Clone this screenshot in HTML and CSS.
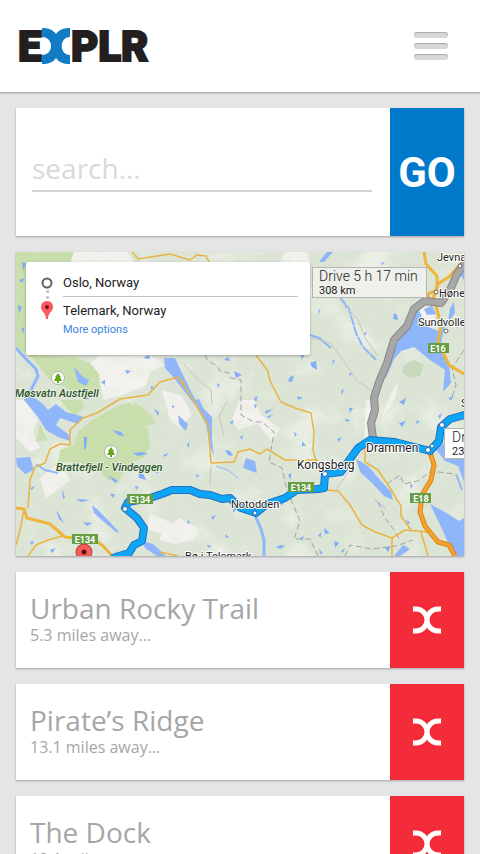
FILE: index.html
```
<!DOCTYPE html>
<html lang="en">

<head>
    <meta charset="UTF-8">
    <meta name="viewport" content="width=device-width, initial-scale=1.0">
    <title>EXPLR</title>
    <link rel="stylesheet" href="styles.css">
</head>

<body>
    <!-- shared X mark -->
    <svg class="defs" width="0" height="0" aria-hidden="true">
        <symbol id="mark" viewBox="0 0 28 28">
            <path d="M0 3H3A11 11 0 0 1 3 25H0M28 3H25A11 11 0 0 0 25 25H28" fill="none" stroke="currentColor" stroke-width="5" />
        </symbol>
    </svg>

    <header class="header">
        <a class="logo" href="#" aria-label="EXPLR">
            <svg width="130" height="36" viewBox="0 0 130 36" aria-hidden="true">
                <text class="logo-text" x="-2" y="33">E</text>
                <path d="M22 0C29 0 33 2 36 6C39 2 43 0 50 0V9C39 9 39 27 50 27V36C43 36 39 34 36 30C33 34 29 36 22 36V27C34 27 34 9 22 9Z" fill="#117bc4" />
                <text class="logo-text" x="51" y="33">PLR</text>
            </svg>
        </a>
        <button class="menu" type="button" aria-label="Menu">
            <span></span>
            <span></span>
            <span></span>
        </button>
    </header>

    <main class="content">
        <form class="card search">
            <div class="field">
                <input type="text" placeholder="search..." aria-label="Search">
            </div>
            <button class="go" type="button">GO</button>
        </form>

        <section class="map">
            <svg class="map-canvas" viewBox="16 252 448 304" preserveAspectRatio="xMidYMid slice" role="img" aria-label="Route from Oslo to Telemark">
                <defs>
                    <filter id="terrain" x="0" y="0" width="1" height="1">
                        <feTurbulence type="fractalNoise" baseFrequency=".025" numOctaves="5" seed="8" />
                        <feColorMatrix values="0 0 0 0 .955  0 0 0 0 .953  0 0 0 0 .94  4 0 0 0 -2.15" />
                    </filter>
                    <filter id="relief" x="0" y="0" width="1" height="1">
                        <feTurbulence type="fractalNoise" baseFrequency=".09" numOctaves="3" seed="3" />
                        <feColorMatrix values="0 0 0 0 .7  0 0 0 0 .77  0 0 0 0 .65  2 0 0 0 -.9" />
                    </filter>
                </defs>
                <rect x="16" y="252" width="448" height="304" fill="#dce5d5" />

                <!-- open ground -->
                <g fill="#f2f1ed">
                    <path d="M70 252H128L134 262H70ZM100 355H150L165 365L150 372L146 385L120 396L104 400L99 378L88 365ZM285 252H307L310 264H280Z" />
                    <path d="M16 400L28 400L38 420L33 432L40 448L30 452L16 438ZM40 478L60 462L70 480L55 492L46 498ZM162 390L182 396L192 415L180 428L170 420ZM162 530L180 518L198 528L194 540L175 544L160 540Z" />
                    <path d="M239 400H254L262 416L280 428L272 442L258 424L238 430L232 420ZM150 514L170 522L168 534L146 530ZM418 305L432 308L436 325L424 332L417 322ZM366 400L372 400L374 435L364 440ZM398 382L396 396L382 418L390 396Z" />
                </g>
                <rect x="16" y="252" width="448" height="304" filter="url(#terrain)" opacity=".5" />

                <!-- parks -->
                <g fill="#c8deab">
                    <path d="M16 252H74L70 264H27L26 350L32 355L75 357L91 364L99 374L100 389L88 394L70 390L48 378L33 358L16 348Z" />
                    <path d="M92 420L114 408L130 402L140 410L148 430L150 447L143 458L128 464L118 482L108 480L98 468L80 463L58 462L60 450L74 445L78 432Z" />
                    <path d="M60 400L82 400L84 408L74 416ZM40 424L48 440L36 442ZM132 400L152 415L155 424L145 426Z" />
                </g>
                <path d="M404 365l10-5 10 4-4 12-11 2-7-6z" fill="#c7d9bd" />
                <rect x="16" y="252" width="448" height="304" filter="url(#relief)" opacity=".3" />

                <!-- lakes and rivers -->
                <g fill="#8fb6fb">
                    <path d="M164 358L175 358L181 371L200 409L194 404L174 378L165 368Z" />
                    <path d="M193 400L199 399L203 408L212 417L212 440L214 456L210 446L206 424L198 410Z" />
                    <path d="M24 400L32 396L43 404L48 410L56 404L66 412L84 417L78 424L60 418L56 425L68 434L71 441L58 437L46 430L38 417Z" />
                    <path d="M16 458L30 457L34 470L25 474L17 466ZM246 458L255 461L257 473L243 468ZM178 415L188 424L186 431L179 424ZM74 367L82 376L89 380L86 386L78 382Z" />
                    <path d="M418 308L426 326L438 331L445 324L441 344L449 365L451 383L443 392L445 370L430 360L414 347L401 351L394 359L386 378L385 374L396 346L406 328Z" />
                    <path d="M450 308L454 302L455 313L448 322ZM424 309L432 306L436 314L427 315Z" />
                    <path d="M434 447L448 442L454 451L464 453V482L458 466L445 461ZM430 504L445 512L459 521L464 518V556H457L449 545L442 529Z" />
                    <path d="M356 459L368 466L380 480L391 492L393 500L384 496L372 483L360 472Z" />
                    <path d="M92 505L97 509L108 520L119 532L116 532L104 522L94 513ZM142 541L153 544L166 556H157L145 548Z" />
                    <path d="M333 252L324 262H319L327 252ZM459 274L464 268V280ZM394 556L403 545L410 549L400 556Z" />
                </g>
                <g fill="none" stroke="#8fb6fb" stroke-width="3">
                    <path d="M16 348L25 358L36 369L38 376L30 392L25 400" />
                    <path d="M254 513L261 529L264 540V556" />
                    <path d="M340 297L349 309L356 333L363 347L376 360" stroke-width="2" stroke-dasharray="10 1" />
                    <path d="M310 335L319 338L331 348M36 464L45 470L58 473M456 443V460M456 474L462 490" stroke-width="2" />
                    <path d="M375 500L385 508M216 466L228 470L238 478" stroke-width="1" />
                </g>
                <!-- tarns -->
                <path fill="#82adfa" d="M22 262l4 1-3 8zM19 280l6-2-3 5zM18 305l4 2-3 7zM21 329l3-2v6zM101 382l4-2v5zM125 370l6 1-4 3zM143 358l6-3 1 4zM85 395l4 4-4 1zM113 430l8 2 3 4-6-1zM133 453l10-1 5 2-10 2zM84 437l3 0-1 11-2 2zM154 409l5 3-1 4zM138 470l6 5 2 5-7-2zM62 489l3 8-2 2zM76 499l14 1-9 2zM108 475l10 6-3 2zM56 510l4 6 4 7-5-4zM83 522l9 1-5 3zM30 488l5-2-3 4zM135 486l4 1-3 3zM110 494l5 0-2 4zM224 360l4-3 2 4zM234 371l8 4-6 3zM217 383l3 2-2 3zM254 398l4-2-2 6zM290 377l4-2-2 7-4-1zM297 396l6 2-5 2zM310 363l6-2 1 9-5-3zM301 355l4-2-3 7zM254 404l3 1-2 4zM265 411l8-2-7 5zM225 450l5 1 3 5-5-1zM230 422l4-2-2 5zM267 416l7-1-6 3zM294 432l3 2-2 3zM302 441l4 5-4 0zM288 475l3-2v7zM303 484l5-1-3 5zM211 517l5-2-3 5zM225 534l4 3-3 1zM233 507l3 3-3 3zM276 547l5-2 4 1-5 3zM300 538l4-2-2 5zM282 501l3 1-4 4zM318 536l3-4v5zM319 549l4 4-3 1zM394 313l3 2 1 5-5-1zM345 304l2 2-2 3zM364 333l3-1-2 4zM391 272l3-2-1 5zM381 263l4-1-3 3zM341 391l3-2-2 6zM399 402l7-4-2 7zM349 408l4 0-3 5zM399 423l7-2-4 6zM345 419l6 1-5 2zM337 439l5-2-3 5zM324 528l6 5-5 1zM334 541l5 2-4 5zM341 551l4-3-2 5zM417 420l3 2-4 2zM438 416l4-3-2 6zM448 398l6-2-3 4zM349 374l3-2-2 5zM333 359l2 2-3 4zM318 311l2-2-1 6zM406 520l4 2-2 3zM385 548l6-2-3 6zM410 484l3 1-2 4zM419 280l2-3v5zM172 405l3 2-3 1zM163 455l6-2-4 4zM240 437l3-2-1 5zM187 445l2-3v6zM196 474l4 2-4 1zM155 470l5 2-4 1zM50 550l6-2-4 5zM30 542l4-1-2 4zM188 520l2 3-3 1zM207 545l5 1-4 2zM151 386l3 1-3 3z" />

                <!-- borders and small roads -->
                <g fill="none" stroke="#a2a39e" stroke-width="1">
                    <path stroke-dasharray="6 3" d="M205 355L208 361L216 365L220 371L229 373L231 378L241 380V415L254 422L262 422L274 432L271 450L269 462L282 468L286 486L292 502L300 521L294 539L310 539L318 556" />
                    <path stroke-dasharray="6 3" d="M387 484L400 475L404 484L418 481L431 471L455 474M378 502L385 518L394 530L400 540M345 556L350 545L372 549L396 546L413 540M464 350L452 368L456 385L451 400" />
                    <path stroke="#c7c6bd" d="M312 338L330 343L342 358L356 380L372 391M340 300L358 320L365 338L378 356M350 470L336 490M211 466L210 486M227 401L219 416L224 436M183 363L197 379L211 390L212 404" />
                </g>

                <!-- yellow roads -->
                <g class="road">
                    <path d="M132 252L138 259L170 254L190 260L197 255L206 256L209 262" />
                    <path d="M185 385L178 377L160 382L148 395L120 399L97 413L83 418L70 430L70 445L60 444L50 449L45 463L35 467L30 480L28 508" />
                    <path d="M178 377L197 406L208 425L211 463L234 462L238 452L250 449L260 454L267 449L285 460H318" />
                    <path d="M256 355L268 371L270 381L281 402L295 408L311 413L314 432L313 450L316 461" />
                    <path d="M62 536L48 540L36 545L28 556M24 510L20 530L16 545M160 552L178 556" />
                    <path d="M326 490L338 491L350 505L362 525L375 532L392 538L405 530L428 532M392 538V556M421 532L428 556" />
                    <path d="M365 443V462L378 470L390 488L401 506V516L411 530" />
                </g>
                <path class="road wide" d="M16 508L24 509L27 518L50 524L65 537L95 540L103 546L112 556" />
                <path class="road wide" d="M424 252L426 264L437 276V290L428 294L430 305M464 260L450 276L438 284L432 302M436 306L441 325L438 342L449 365L464 374" />
                <path d="M430 452L434 465L431 480L422 495L420 512L425 526L438 542L449 545L455 556" fill="none" stroke="#d98719" stroke-width="5" />
                <path d="M430 452L434 465L431 480L422 495L420 512L425 526L438 542L449 545L455 556" fill="none" stroke="#f9a12c" stroke-width="3" />

                <!-- alternative route -->
                <path d="M373 438L371 423L375 410L374 398L379 382L387 363L394 340L407 326L414 309L425 301L441 303L450 290L457 274L466 262" class="route" stroke="#868686" stroke-width="8" />
                <path d="M373 438L371 423L375 410L374 398L379 382L387 363L394 340L407 326L414 309L425 301L441 303L450 290L457 274L466 262" class="route" stroke="#a7a7a7" stroke-width="6" />

                <!-- chosen route -->
                <path d="M112 558L129 553L134 545L142 541L144 528L137 518L125 508L128 502L150 498L162 494L172 490L190 490L200 494L210 495L222 499L230 498L241 508L256 513L267 504L285 498L297 490L318 489L324 488L325 474L341 472L350 459L358 448L370 440L395 442L430 451L439 441L441 427L450 419L468 414" class="route" stroke="#1f6fc0" stroke-width="8" />
                <path d="M112 558L129 553L134 545L142 541L144 528L137 518L125 508L128 502L150 498L162 494L172 490L190 490L200 494L210 495L222 499L230 498L241 508L256 513L267 504L285 498L297 490L318 489L324 488L325 474L341 472L350 459L358 448L370 440L395 442L430 451L439 441L441 427L450 419L468 414" class="route" stroke="#0fa5f7" stroke-width="6" />
                <g fill="#fff" stroke="#2868b0" stroke-width="1">
                    <circle cx="125" cy="509" r="2.5" />
                    <circle cx="255" cy="513" r="2" />
                    <circle cx="325" cy="474" r="2.5" />
                    <circle cx="432" cy="446" r="2" />
                    <circle cx="442" cy="425" r="2.5" />
                </g>
                <g fill="#fff" stroke="#666" stroke-width="1">
                    <circle cx="436" cy="292" r="2" />
                    <circle cx="446" cy="331" r="2" />
                    <circle cx="460" cy="266" r="2" />
                </g>

                <!-- park icons -->
                <g id="tree">
                    <circle cx="58" cy="378" r="6.5" fill="#fff" stroke="#aeb8a2" />
                    <path d="M58 373L61 377H60L62 381H59V383H57V381H54L56 377H55Z" fill="#66a51a" />
                </g>
                <use href="#tree" x="53" y="74" />

                <!-- road shields -->
                <g fill="#669d45">
                    <rect x="428" y="343" width="21" height="10" />
                    <rect x="127" y="494" width="26" height="10" />
                    <rect x="288" y="482" width="26" height="10" />
                    <rect x="410" y="493" width="21" height="10" />
                    <rect x="72" y="534" width="26" height="10" />
                </g>
                <g class="shield">
                    <text x="438" y="352">E16</text>
                    <text x="140" y="503">E134</text>
                    <text x="301" y="491">E134</text>
                    <text x="421" y="502">E18</text>
                    <text x="85" y="543">E134</text>
                </g>

                <g class="place">
                    <text x="437" y="261">Jevnaker</text>
                    <text x="439" y="297">Hønefoss</text>
                    <text x="418" y="326">Sundvollen</text>
                    <text x="461" y="407">Sandvika</text>
                    <text x="231" y="508">Notodden</text>
                    <text x="185" y="560">Bø i Telemark</text>
                    <text class="town" x="297" y="469">Kongsberg</text>
                    <text class="town" x="366" y="452">Drammen</text>
                </g>
                <circle cx="428" cy="450" r="2.5" fill="#fff" stroke="#2868b0" />
                <g class="place park">
                    <text x="15" y="397">Møsvatn Austfjell</text>
                    <text x="56" y="471">Brattefjell - Vindeggen</text>
                </g>

                <!-- destination pin -->
                <circle cx="84" cy="552" r="8" fill="#f65b57" stroke="#a94440" />
                <circle cx="84" cy="552" r="2.5" fill="#5d1112" />

                <!-- travel times -->
                <g class="trip">
                    <rect x="312.500" y="267.500" width="114" height="30" fill="#f0f1ee" fill-opacity=".92" stroke="#b4b6b1" />
                    <text x="319" y="281">Drive 5 h 17 min</text>
                    <text class="km" x="319" y="294">308 km</text>
                    <rect x="444.500" y="428.500" width="114" height="30" fill="#fff" stroke="#b4b6b1" />
                    <text x="452" y="442">Drive 3 h 20 min</text>
                    <text class="km" x="452" y="455">233 km</text>
                </g>
            </svg>

            <div class="directions">
                <svg class="stops" width="12" height="46" viewBox="0 0 12 46" aria-hidden="true">
                    <circle cx="6" cy="7" r="4.500" fill="#fff" stroke="#626262" stroke-width="2" />
                    <path d="M5 14h3v3h-3zM5 20h3v3h-3z" fill="#ccc" />
                    <path d="M6 25C2 25 0 28 0 31C0 36 5 36 5 43H7C7 36 12 36 12 31C12 28 10 25 6 25Z" fill="#fb5960" />
                    <circle cx="6" cy="31" r="2" fill="#6a1418" />
                </svg>
                <div class="places">
                    <input type="text" value="Oslo, Norway" aria-label="From">
                    <input type="text" value="Telemark, Norway" aria-label="To">
                    <a href="#">More options</a>
                </div>
            </div>
        </section>

        <article class="card trail">
            <div class="info">
                <h2>Urban Rocky Trail</h2>
                <p>5.3 miles away...</p>
            </div>
            <button class="open" type="button" aria-label="Open Urban Rocky Trail">
                <svg width="28" height="28" aria-hidden="true"><use href="#mark" /></svg>
            </button>
        </article>

        <article class="card trail">
            <div class="info">
                <h2>Pirate’s Ridge</h2>
                <p>13.1 miles away...</p>
            </div>
            <button class="open" type="button" aria-label="Open Pirate’s Ridge">
                <svg width="28" height="28" aria-hidden="true"><use href="#mark" /></svg>
            </button>
        </article>

        <article class="card trail">
            <div class="info">
                <h2>The Dock</h2>
                <p>13.1 miles away...</p>
            </div>
            <button class="open" type="button" aria-label="Open The Dock">
                <svg width="28" height="28" aria-hidden="true"><use href="#mark" /></svg>
            </button>
        </article>
    </main>
</body>

</html>
```

FILE: styles.css
```
* {
    margin: 0;
    padding: 0;
    box-sizing: border-box;
}

body {
    background-color: #e5e5e5;
    font-family: "Open Sans", "Noto Sans", sans-serif;
    color: #a6a6a6;
}

button {
    border: 0;
    cursor: pointer;
}

.defs {
    display: block;
}

.header {
    display: flex;
    align-items: center;
    justify-content: space-between;
    height: 92px;
    padding: 0 32px 0 20px;
    background-color: #fff;
    box-shadow: 0 1px 2px rgba(0, 0, 0, 0.35);
}

.logo svg {
    display: block;
    overflow: visible;
}

.logo-text {
    font-family: Roboto, sans-serif;
    font-size: 42px;
    font-weight: 900;
    fill: #231f20;
    stroke: #231f20;
    stroke-width: 2px;
}

.menu {
    display: flex;
    flex-direction: column;
    gap: 5px;
    width: 34px;
    background: none;
}

.menu span {
    height: 6px;
    border-radius: 3px;
    background-color: #d8d8d8;
    box-shadow: inset 0 1px 1px #aaa;
}

.content {
    display: flex;
    flex-direction: column;
    gap: 16px;
    padding: 16px;
}

.card {
    display: flex;
    background-color: #fff;
    box-shadow: 0 1px 2px rgba(0, 0, 0, 0.3);
}

/* search */
.search {
    height: 128px;
}

.field {
    flex: 1;
    padding: 38px 18px 0 16px;
}

.field input {
    width: 100%;
    height: 46px;
    border: 0;
    border-bottom: 2px solid #d3d3d3;
    background: none;
    font-family: inherit;
    font-size: 28px;
    color: #a6a6a6;
    outline: none;
}

.field input::placeholder {
    color: #d9d9d9;
    opacity: 1;
}

.go,
.open {
    flex: none;
    display: flex;
    align-items: center;
    justify-content: center;
    width: 74px;
    color: #fff;
}

.go {
    background-color: #0079cb;
    font-family: Roboto, sans-serif;
    font-size: 42px;
    font-weight: bold;
}

/* map */
.map {
    position: relative;
    height: 304px;
    overflow: hidden;
    box-shadow: 0 1px 2px rgba(0, 0, 0, 0.3);
}

.map-canvas {
    display: block;
    width: 100%;
    height: 100%;
    font-family: Roboto, sans-serif;
}

.road {
    fill: none;
    stroke: #e9b443;
    stroke-width: 1.5px;
    stroke-linejoin: round;
}

.wide {
    stroke: #efb53a;
    stroke-width: 3px;
}

.route {
    fill: none;
    stroke-linejoin: round;
}

.shield {
    font-size: 9px;
    font-weight: bold;
    fill: #fff;
    text-anchor: middle;
}

.place {
    font-size: 11px;
    fill: #222;
    stroke: #fff;
    stroke-width: 2px;
    stroke-linejoin: round;
    paint-order: stroke;
}

.town {
    font-size: 12px;
}

.park {
    font-style: italic;
    font-weight: 500;
    fill: #2d5434;
    stroke: #e6efd9;
}

.trip {
    font-size: 14px;
    font-weight: 300;
}

.trip text {
    fill: #222;
}

.trip .km {
    font-size: 11px;
    font-weight: 400;
}

.directions {
    position: absolute;
    top: 10px;
    left: 10px;
    display: flex;
    gap: 10px;
    width: 284px;
    height: 93px;
    padding: 12px 12px 0 15px;
    border-radius: 2px;
    background-color: #fff;
    box-shadow: 0 1px 3px rgba(0, 0, 0, 0.3);
}

.stops {
    flex: none;
    margin-top: 2px;
}

.places {
    flex: 1;
    display: flex;
    flex-direction: column;
    align-items: flex-start;
    font-family: Roboto, sans-serif;
}

.places input {
    width: 100%;
    height: 27px;
    border: 0;
    background: none;
    font-family: inherit;
    font-size: 13px;
    color: #222;
    outline: none;
}

.places input:first-child {
    height: 23px;
    padding-bottom: 5px;
    border-bottom: 1px solid #c4c4c4;
}

.places a {
    font-size: 11px;
    line-height: 12px;
    color: #3b83e0;
    text-decoration: none;
}

/* trails */
.trail {
    height: 96px;
}

.info {
    flex: 1;
    padding: 18px 14px 0;
}

.info h2 {
    font-size: 28px;
    font-weight: 400;
    line-height: 36px;
}

.info p {
    font-size: 16px;
    line-height: 18px;
}

.open {
    background-color: #f42b38;
}
```
